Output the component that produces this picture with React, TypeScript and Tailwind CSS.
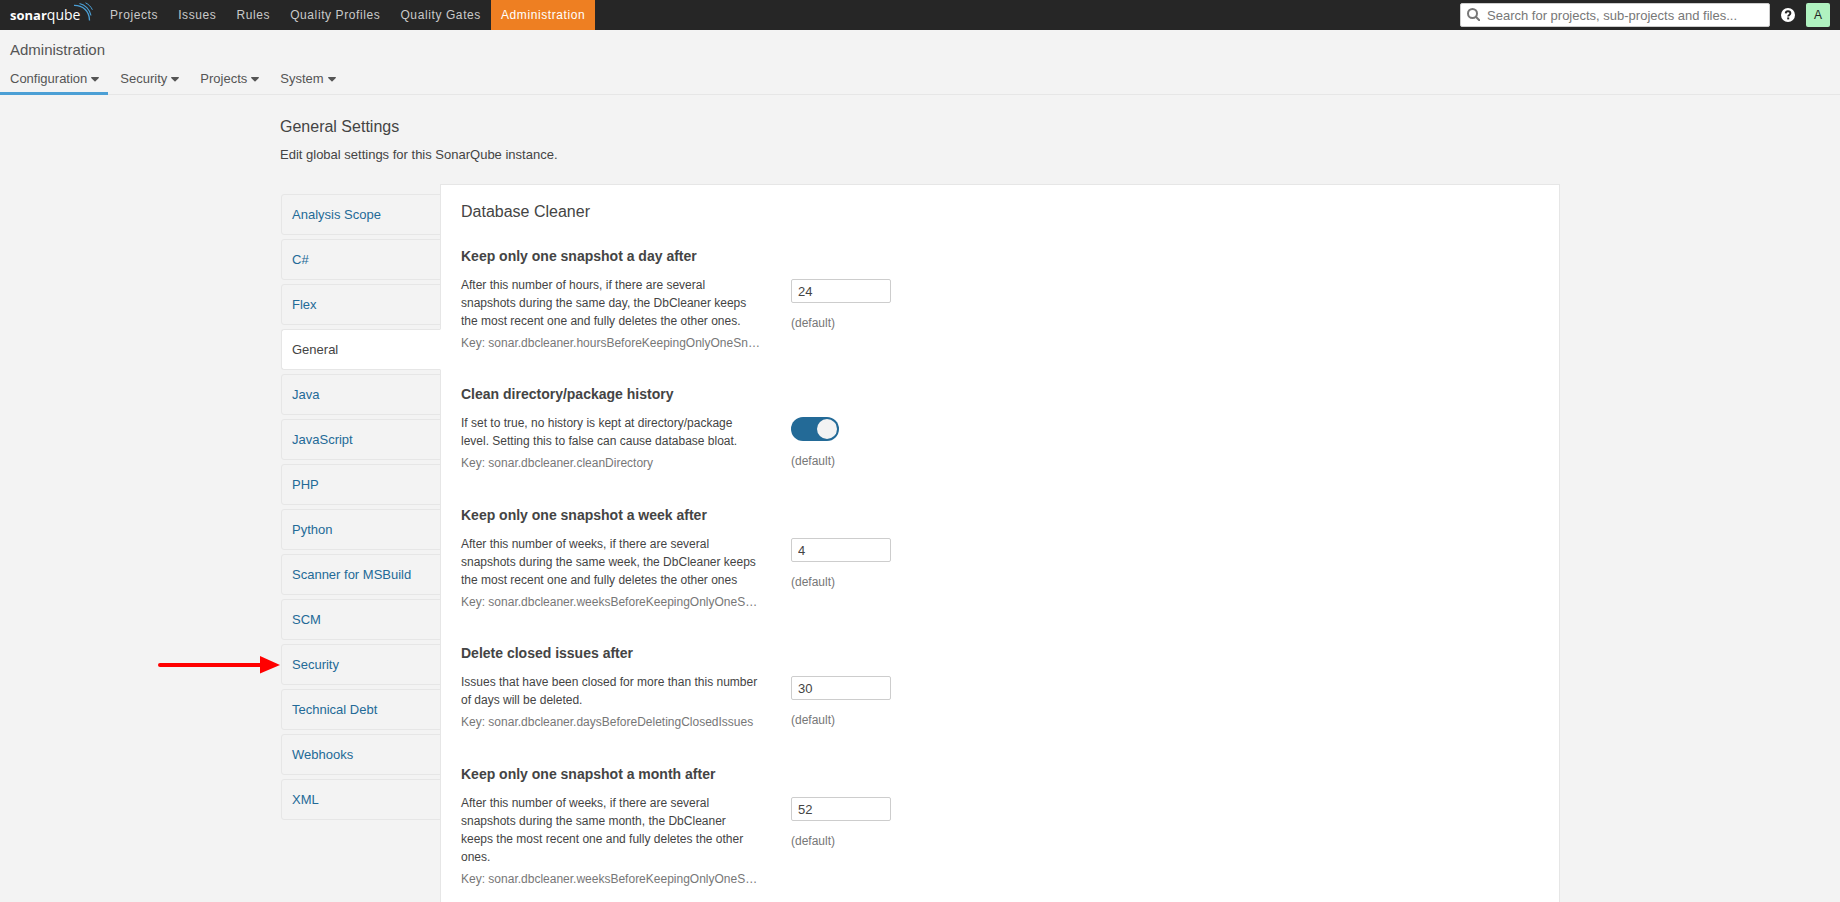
import { useState } from "react";

const topLinks = ["Projects", "Issues", "Rules", "Quality Profiles", "Quality Gates", "Administration"];
const adminTabs = ["Configuration", "Security", "Projects", "System"];
const categories = [
  "Analysis Scope",
  "C#",
  "Flex",
  "General",
  "Java",
  "JavaScript",
  "PHP",
  "Python",
  "Scanner for MSBuild",
  "SCM",
  "Security",
  "Technical Debt",
  "Webhooks",
  "XML",
];

type Setting = { name: string; description: string; property: string; value: string | boolean };

const settings: Setting[] = [
  {
    name: "Keep only one snapshot a day after",
    description:
      "After this number of hours, if there are several snapshots during the same day, the DbCleaner keeps the most recent one and fully deletes the other ones.",
    property: "sonar.dbcleaner.hoursBeforeKeepingOnlyOneSnapshotByDay",
    value: "24",
  },
  {
    name: "Clean directory/package history",
    description:
      "If set to true, no history is kept at directory/package level. Setting this to false can cause database bloat.",
    property: "sonar.dbcleaner.cleanDirectory",
    value: true,
  },
  {
    name: "Keep only one snapshot a week after",
    description:
      "After this number of weeks, if there are several snapshots during the same week, the DbCleaner keeps the most recent one and fully deletes the other ones",
    property: "sonar.dbcleaner.weeksBeforeKeepingOnlyOneSnapshotByWeek",
    value: "4",
  },
  {
    name: "Delete closed issues after",
    description: "Issues that have been closed for more than this number of days will be deleted.",
    property: "sonar.dbcleaner.daysBeforeDeletingClosedIssues",
    value: "30",
  },
  {
    name: "Keep only one snapshot a month after",
    description:
      "After this number of weeks, if there are several snapshots during the same month, the DbCleaner keeps the most recent one and fully deletes the other ones.",
    property: "sonar.dbcleaner.weeksBeforeKeepingOnlyOneSnapshotByMonth",
    value: "52",
  },
];

function Logo() {
  return (
    <a href="#" aria-label="sonarqube" className="flex h-[30px] w-[90px] items-start pt-[6px] font-['Open_Sans',sans-serif] text-white">
      <span className="flex items-baseline leading-[18px]">
        <span className="text-[13px] font-bold">sonar</span>
        <span className="text-[14px]">qube</span>
      </span>
      <svg width="20" height="20" viewBox="0 0 20 20" fill="none" stroke="#4b9fd5" className="-ml-[7px] -mt-1 shrink-0">
        <path d="M1 3.4C9.500 3.200 16.500 9 16.500 18.500" strokeWidth="1.300" />
        <path d="M6.500 1.500C12 2.800 16.800 7.500 18 13.500" strokeWidth="1.100" />
        <path d="M12.500 .8C15.800 2.400 18 4.800 19.400 7.800" strokeWidth="1" />
      </svg>
    </a>
  );
}

function Caret() {
  return (
    <svg width="8" height="5" viewBox="0 0 8 5" fill="currentColor" aria-hidden="true">
      <path d="M.6 0h6.800c.5 0 .7.5.4.900L4.500 4.200c-.3.300-.7.300-1 0L.2.900C-.1.500.1 0 .6 0z" />
    </svg>
  );
}

function TopBar() {
  return (
    <header className="flex h-[30px] items-center bg-[#262626] px-[10px]">
      <Logo />
      <nav className="flex flex-1 text-xs tracking-wider">
        {topLinks.map((label) => (
          <a
            key={label}
            href="#"
            className={`h-[30px] px-[10px] leading-[30px] ${
              label === "Administration" ? "bg-[#ee7f22] text-white" : "text-[#cacaca]"
            }`}
          >
            {label}
          </a>
        ))}
      </nav>
      <label className="flex h-6 w-[310px] items-center gap-[7px] rounded-[2px] border border-[#cdcdcd] bg-white px-[6px]">
        <svg width="13" height="13" viewBox="0 0 13 13" fill="none" stroke="#777" strokeWidth="2" className="mb-[2px] shrink-0" aria-hidden="true">
          <circle cx="5.500" cy="5.500" r="4.500" />
          <path d="M8.800 8.800l3.500 3.500" strokeLinecap="round" />
        </svg>
        <input
          type="search"
          aria-label="Search"
          placeholder="Search for projects, sub-projects and files..."
          className="h-full min-w-0 flex-1 bg-transparent text-[13px] text-[#444] outline-none placeholder:text-[#777]"
        />
      </label>
      <button type="button" aria-label="Help" className="ml-[11px]">
        <svg width="14" height="14" viewBox="0 0 14 14" aria-hidden="true">
          <circle cx="7" cy="7" r="7" fill="#fff" />
          <path d="M4.700 5.400C4.800 3.900 5.700 3.300 7 3.300s2.400.7 2.400 2c0 1.600-2.200 1.600-2.200 3.100" fill="none" stroke="#262626" strokeWidth="1.900" />
          <rect x="6.200" y="9.400" width="2" height="2" fill="#262626" />
        </svg>
      </button>
      <button type="button" aria-label="Account" className="ml-[11px] h-6 w-6 rounded-[2px] bg-[#b0f2c0] text-xs text-[#222]">
        A
      </button>
    </header>
  );
}

function AdminBar() {
  return (
    <div className="border-b border-[#e6e6e6]">
      <h1 className="px-[10px] pt-[10px] text-[15px] leading-5 text-[#555]">Administration</h1>
      <nav className="-mb-px flex gap-[2px] pt-[6px] text-[13px] text-[#555]">
        {adminTabs.map((label, i) => (
          <button
            key={label}
            type="button"
            className={`flex h-[29px] items-center gap-1 border-b-3 pl-[10px] pr-[9px] ${
              i === 0 ? "border-[#4b9fd5]" : "border-transparent"
            }`}
          >
            {label}
            <Caret />
          </button>
        ))}
      </nav>
    </div>
  );
}

function Arrow() {
  return (
    <svg
      width="122"
      height="18"
      viewBox="0 0 122 18"
      className="pointer-events-none absolute right-full top-[11px] mr-[2px]"
      aria-hidden="true"
    >
      <path d="M2 9h102" stroke="red" strokeWidth="4" strokeLinecap="round" />
      <path d="M102 0l20 9-20 8.500z" fill="red" />
    </svg>
  );
}

function SideMenu() {
  return (
    <nav className="-mr-px ml-px mt-[10px] flex w-[160px] shrink-0 flex-col gap-1 text-[13px]">
      {categories.map((label) => {
        const active = label === "General";
        return (
          <a
            key={label}
            href="#"
            className={`relative flex h-[41px] items-center rounded-l-[3px] border px-[10px] ${
              active
                ? "z-10 border-[#e6e6e6] border-r-white bg-white text-[#444]"
                : "border-[#e6e6e6] text-[#236a97]"
            }`}
          >
            {label}
            {label === "Security" && <Arrow />}
          </a>
        );
      })}
    </nav>
  );
}

function Toggle({ label }: { label: string }) {
  const [on, setOn] = useState(true);
  return (
    <button
      type="button"
      role="switch"
      aria-checked={on}
      aria-label={label}
      onClick={() => setOn(!on)}
      className={`flex h-6 w-12 items-center rounded-full px-[2px] ${on ? "justify-end bg-[#236a97]" : "bg-[#cdcdcd]"}`}
    >
      <span className="h-5 w-5 rounded-full bg-[#f3f3f3]" />
    </button>
  );
}

function SettingRow({ setting }: { setting: Setting }) {
  return (
    <section>
      <h3 className="text-sm font-bold leading-5">{setting.name}</h3>
      <div className="flex min-h-[69px] gap-[30px] pt-[10px]">
        <div className="w-[300px] shrink-0 text-xs leading-[18px]">
          <p>{setting.description}</p>
          <p className="mt-1 truncate text-[#777]">Key: {setting.property}</p>
        </div>
        <div className="pt-[3px]">
          {typeof setting.value === "string" ? (
            <input
              aria-label={setting.name}
              defaultValue={setting.value}
              className="block h-6 w-[100px] rounded-[2px] border border-[#cdcdcd] bg-white px-[6px] text-[13px] text-[#444]"
            />
          ) : (
            <Toggle label={setting.name} />
          )}
          <p className="mt-[11px] text-xs leading-[18px] text-[#777]">(default)</p>
        </div>
      </div>
    </section>
  );
}

export default function App() {
  return (
    <div className="flex min-h-screen flex-col bg-[#f3f3f3] font-['Liberation_Sans',Arial,sans-serif] text-[#444]">
      <TopBar />
      <AdminBar />
      <main className="mx-auto flex w-full max-w-[1320px] flex-1 flex-col px-5 pt-5">
        <h2 className="text-base leading-6">General Settings</h2>
        <p className="mt-[6px] text-[13px] leading-5">Edit global settings for this SonarQube instance.</p>
        <div className="mt-[19px] flex flex-1">
          <SideMenu />
          <div className="min-w-0 flex-1 border border-b-0 border-[#e6e6e6] bg-white px-5 pt-[15px]">
            <h2 className="text-base leading-6">Database Cleaner</h2>
            <div className="mt-[22px] flex flex-col gap-[32px]">
              {settings.map((setting) => (
                <SettingRow key={setting.property} setting={setting} />
              ))}
            </div>
          </div>
        </div>
      </main>
    </div>
  );
}
